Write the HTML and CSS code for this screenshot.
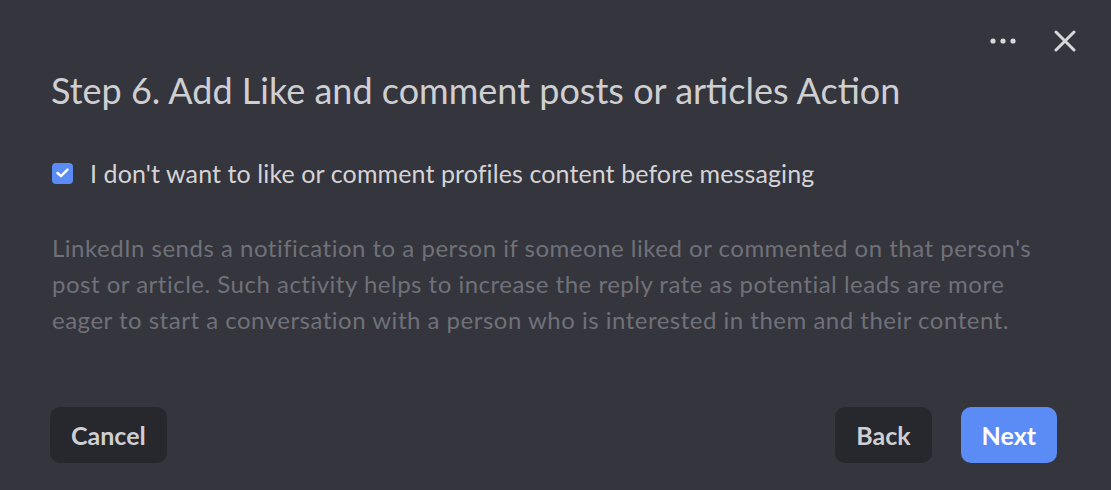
FILE: index.html
```html
<!DOCTYPE html>
<html lang="en">
<head>
    <meta charset="UTF-8">
    <meta name="viewport" content="width=device-width, initial-scale=1.0">
    <title>Step 6</title>
    <link rel="stylesheet" href="styles.css">
</head>
<body>
    <div class="dialog">
        <div class="toolbar">
            <button class="icon-btn" aria-label="More">
                <svg width="26" height="6" viewBox="0 0 26 6"><circle cx="3" cy="3" r="2.6" fill="#d8d8d8"/><circle cx="13" cy="3" r="2.6" fill="#d8d8d8"/><circle cx="23" cy="3" r="2.6" fill="#d8d8d8"/></svg>
            </button>
            <button class="icon-btn" aria-label="Close">
                <svg width="22" height="22" viewBox="0 0 22 22"><path d="M2 2 L20 20 M20 2 L2 20" stroke="#d8d8d8" stroke-width="3" stroke-linecap="round"/></svg>
            </button>
        </div>
        <h1 class="title">Step 6. Add Like and comment posts or articles Action</h1>

        <label class="check-row">
            <span class="check-box">
                <svg width="13" height="10" viewBox="0 0 13 10"><path d="M1.5 5 L5 8.2 L11.5 1.6" fill="none" stroke="#fff" stroke-width="2.4" stroke-linecap="round" stroke-linejoin="round"/></svg>
            </span>
            <span>I don't want to like or comment profiles content before messaging</span>
        </label>

        <p class="hint">LinkedIn sends a notification to a person if someone liked or commented on that person's post or article. Such activity helps to increase the reply rate as potential leads are more eager to start a conversation with a person who is interested in them and their content.</p>

        <div class="actions">
            <button class="btn btn-dark">Cancel</button>
            <div class="actions-right">
                <button class="btn btn-dark">Back</button>
                <button class="btn btn-primary">Next</button>
            </div>
        </div>
    </div>
</body>
</html>
```

FILE: styles.css
```css
body { margin: 0; background-color: #34353d; font-family: Lato, "Open Sans", sans-serif; }
.dialog { height: 490px; box-sizing: border-box; padding: 30px 54px 27px 50px; display: flex; flex-direction: column; }

.toolbar { display: flex; justify-content: flex-end; align-items: center; gap: 38px; height: 22px; margin-right: -19px; }
.icon-btn { background: none; border: none; padding: 0; cursor: pointer; display: flex; }

.title { margin: 16px 0 0 1px; font-size: 36px; font-weight: 400; color: #cfcfd1; line-height: 44px; }

.check-row { display: flex; align-items: center; gap: 17px; margin-top: 46px; margin-left: 2px; font-size: 25px; letter-spacing: 0.1px; line-height: 30px; color: #d4d4d6; cursor: pointer; }
.check-box { width: 21px; height: 21px; border-radius: 4px; background-color: #5b8cf6; display: flex; align-items: center; justify-content: center; flex-shrink: 0; }

.hint { max-width: 1000px; margin: 42px 0 0 2px; font-size: 24px; letter-spacing: 0.5px; line-height: 36px; color: #707178; }

.actions { margin-top: auto; display: flex; justify-content: space-between; align-items: center; }
.actions-right { display: flex; gap: 29px; }
.btn { height: 56px; padding: 0 21px; border: none; border-radius: 10px; font-family: inherit; font-size: 25px; font-weight: 700; cursor: pointer; }
.btn-dark { background-color: #27282d; color: #cfcfd1; }
.btn-primary { background-color: #5b8cf6; color: #ffffff; }
```
